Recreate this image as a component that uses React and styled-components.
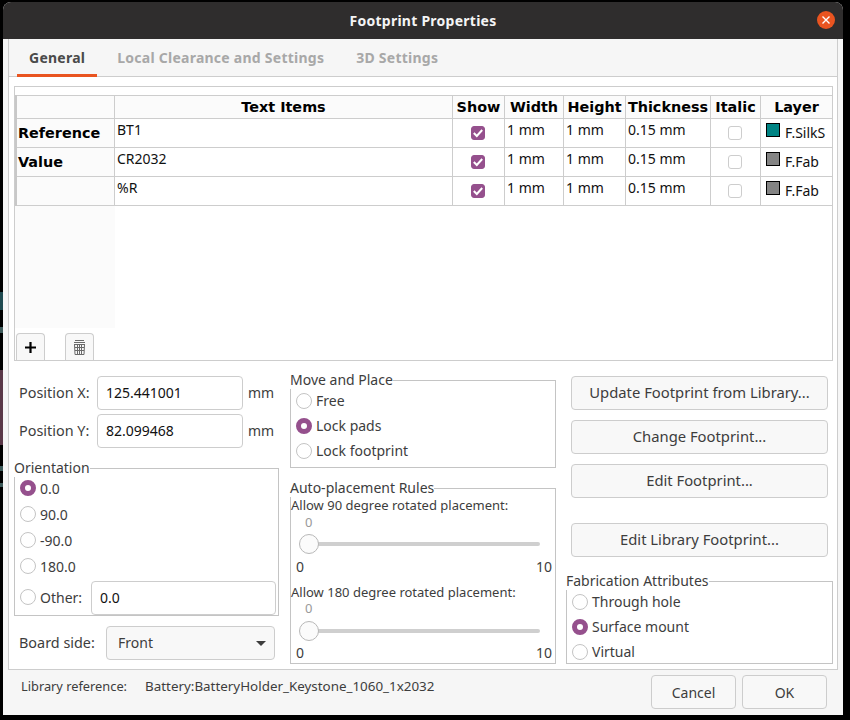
import React from "react"
import styled, { createGlobalStyle } from "styled-components"

const GlobalStyle = createGlobalStyle`
  html, body {
    margin: 0;
    padding: 0;
    background: #000;
  }
  * {
    box-sizing: border-box;
  }
`

const ui = `"Noto Sans", "Open Sans", sans-serif`
const bold = `"DejaVu Sans", sans-serif`
const purple = "#95508d"

const Screen = styled.div`
  width: 850px;
  height: 720px;
  padding: 2px 7px 5px 3px;
  background-color: #000;
  background-image: linear-gradient(
    to bottom,
    transparent 292px,
    #1f4a50 292px,
    #1f4a50 310px,
    transparent 310px,
    transparent 327px,
    #3d5a5a 327px,
    #3d5a5a 333px,
    transparent 333px,
    transparent 370px,
    #5a3848 370px,
    #5a3848 445px,
    transparent 445px,
    transparent 466px,
    #3d5a5a 466px,
    #3d5a5a 471px,
    transparent 471px,
    transparent 483px,
    #3d5a5a 483px,
    #3d5a5a 487px,
    transparent 487px
  );
  background-size: 3px 100%;
  background-repeat: no-repeat;
  font-family: ${ui};
  font-size: 14px;
  color: #3d3d3d;
  overflow: hidden;
`

const Dialog = styled.div`
  width: 840px;
  height: 713px;
  display: flex;
  flex-direction: column;
  background: #f6f6f6;
  border-radius: 8px 8px 0 0;
  overflow: hidden;
`

const TitleBar = styled.div`
  height: 37px;
  flex: none;
  display: flex;
  align-items: center;
  justify-content: center;
  position: relative;
  background: #2f2d2d;
  color: #f4f4f4;
  font-weight: 700;
  font-size: 14px;
  letter-spacing: 0.25px;
`

const CloseButton = styled.div`
  position: absolute;
  right: 8px;
  top: 9px;
  width: 18px;
  height: 18px;
  border-radius: 50%;
  background: #e95420;
  display: flex;
  align-items: center;
  justify-content: center;
`

const Notebook = styled.div`
  flex: none;
  margin-left: 5px;
  width: 830px;
  height: 631px;
  display: flex;
  flex-direction: column;
  border: 1px solid #cdcdcd;
  border-top: none;
`

const TabStrip = styled.div`
  flex: none;
  height: 38px;
  display: flex;
  padding-left: 8px;
  background: #f6f6f6;
  border-bottom: 1px solid #cdcdcd;
`

const Tab = styled.div`
  height: 38px;
  padding: 2px 12px 0;
  margin-right: 8px;
  display: flex;
  align-items: center;
  font-weight: 700;
  font-size: 14px;
  letter-spacing: 0.25px;
  color: ${(p) => (p.$active ? "#4a4a4a" : "#a8a8a8")};
  border-bottom: 3px solid ${(p) => (p.$active ? "#e95420" : "transparent")};
`

const Page = styled.div`
  flex: 1;
  background: #fff;
  padding: 9px 4px 0 5px;
  display: flex;
  flex-direction: column;
`

const GridBox = styled.div`
  height: 275px;
  flex: none;
  border: 1px solid #cdcdcd;
  display: flex;
  flex-direction: column;
  padding-top: 8px;
`

const GridArea = styled.div`
  height: 233px;
  flex: none;
  background: linear-gradient(to right, #fbfbfb 100px, #fff 100px);
`

const Table = styled.div`
  display: grid;
  grid-template-columns: 98px 338px 52px 59px 62px 85px 50px 72px;
  grid-template-rows: 24px;
  grid-auto-rows: 29px;
  border-left: 2px solid #c8c8c8;
`

const HeadCell = styled.div`
  display: flex;
  align-items: center;
  justify-content: center;
  background: #fbfbfb;
  font-family: ${bold};
  font-weight: 700;
  font-size: 14.4px;
  color: #000;
  white-space: nowrap;
  border-top: 1px solid #cdcdcd;
  border-right: 1px solid #cdcdcd;
  border-bottom: 1px solid #cdcdcd;
`

const RowLabel = styled.div`
  display: flex;
  align-items: center;
  padding-left: 1px;
  background: #fbfbfb;
  font-family: ${bold};
  font-weight: 700;
  font-size: 14.4px;
  color: #000;
  border-right: 1px solid #cdcdcd;
  border-bottom: 1px solid #cdcdcd;
`

const Cell = styled.div`
  padding: 2px 0 0 2px;
  font-size: 14px;
  line-height: 18px;
  color: #111;
  white-space: nowrap;
  overflow: hidden;
  border-right: 1px solid #cdcdcd;
  border-bottom: 1px solid #cdcdcd;
`

const CheckCell = styled(Cell)`
  display: flex;
  align-items: center;
  justify-content: center;
  padding: 0 1px 0 0;
`

const Check = styled.div`
  width: 14px;
  height: 14px;
  border-radius: 3px;
  display: flex;
  align-items: center;
  justify-content: center;
  background: ${(p) => (p.$on ? purple : "#fff")};
  border: 1px solid ${(p) => (p.$on ? purple : "#cdcdcd")};
`

const LayerCell = styled(Cell)`
  display: flex;
  align-items: flex-start;
  gap: 5px;
  padding: 4px 0 0 5px;
`

const Swatch = styled.div`
  flex: none;
  width: 14px;
  height: 14px;
  border: 1px solid #000;
  background: ${(p) => p.$color};
`

const LayerName = styled.span`
  padding-top: 1px;
`

const Toolbar = styled.div`
  flex: none;
  height: 32px;
  display: flex;
  align-items: flex-end;
  gap: 20px;
  padding-left: 1px;
`

const ToolButton = styled.div`
  width: 29px;
  height: 27px;
  display: flex;
  align-items: center;
  justify-content: center;
  background: #f8f8f8;
  border: 1px solid #cdcdcd;
  border-bottom: none;
  border-radius: 4px 4px 0 0;
`

const Columns = styled.div`
  flex: none;
  display: flex;
  margin-top: 11px;
`

const LeftColumn = styled.div`
  width: 276px;
  flex: none;
  display: flex;
  flex-direction: column;
  padding-top: 4px;
`

const MiddleColumn = styled.div`
  width: 266px;
  flex: none;
  display: flex;
  flex-direction: column;
`

const RightColumn = styled.div`
  width: 267px;
  flex: none;
  margin-left: 10px;
  display: flex;
  flex-direction: column;
  padding-top: 4px;
`

const FieldRow = styled.div`
  display: flex;
  align-items: center;
  height: 34px;
  margin-bottom: ${(p) => p.$mb || 0}px;
  padding-left: 5px;
`

const FieldLabel = styled.div`
  width: 78px;
  flex: none;
  padding-bottom: 2px;
  font-size: 14.4px;
`

const TextField = styled.div`
  width: ${(p) => p.$w}px;
  height: 34px;
  flex: none;
  margin: ${(p) => p.$mt || 0}px 0 0 ${(p) => p.$ml || 0}px;
  display: flex;
  align-items: center;
  padding: 0 0 1px 8px;
  background: #fff;
  border: 1px solid #cdcdcd;
  border-radius: 4px;
  color: #111;
`

const Unit = styled.div`
  margin-left: 5px;
  padding-bottom: 2px;
`

const Group = styled.fieldset`
  margin: ${(p) => p.$mt || 0}px 0 0;
  padding: 0;
  min-width: 0;
  width: ${(p) => p.$w}px;
  height: ${(p) => p.$h}px;
  border: 1px solid #c4c4c4;
  border-radius: 0;
  display: flex;
  flex-direction: column;
`

const Legend = styled.legend`
  padding: 0 0 2px;
  margin: 0 0 ${(p) => -(p.$pull || 1)}px -1px;
  line-height: 15px;
  white-space: nowrap;
`

const RadioRow = styled.div`
  display: flex;
  align-items: center;
  height: ${(p) => p.$h}px;
  padding-left: 5px;
  gap: 4px;
`

const Radio = styled.div`
  width: 16px;
  height: 16px;
  flex: none;
  border-radius: 50%;
  border: ${(p) => (p.$on ? `5px solid ${purple}` : "1px solid #c4c4c4")};
  background: #fff;
`

const SideRow = styled.div`
  display: flex;
  align-items: center;
  margin-top: 10px;
  padding-left: 5px;
`

const SideLabel = styled.div`
  width: 87px;
  flex: none;
  padding-bottom: 1px;
  font-size: 14.4px;
`

const Select = styled.div`
  width: 169px;
  height: 34px;
  display: flex;
  align-items: center;
  justify-content: space-between;
  padding: 0 8px 1px 11px;
  background: #f8f8f8;
  border: 1px solid #cdcdcd;
  border-radius: 4px;
`

const Caret = styled.div`
  width: 0;
  height: 0;
  margin-top: 1px;
  border-left: 5px solid transparent;
  border-right: 5px solid transparent;
  border-top: 5px solid #3d3d3d;
`

const HelpText = styled.div`
  font-size: 13px;
  line-height: 17px;
  margin: ${(p) => p.$shift}px 0 ${(p) => -p.$shift}px;
  white-space: nowrap;
`

const Slider = styled.div`
  display: flex;
  flex-direction: column;
  height: 69px;
  padding: 0 3px 0 5px;
`

const SliderValue = styled.div`
  height: 17px;
  padding: 2px 0 0 9px;
  line-height: 15px;
  font-size: 13px;
  color: #9a9a9a;
`

const Track = styled.div`
  height: 20px;
  margin: ${(p) => (p.$low ? 5 : 4)}px 0 0 13px;
  width: 231px;
  position: relative;
  display: flex;
  align-items: center;
`

const TrackLine = styled.div`
  width: 100%;
  height: 4px;
  border-radius: 2px;
  background: #cfcfcf;
`

const Thumb = styled.div`
  position: absolute;
  left: -10px;
  top: 0;
  width: 20px;
  height: 20px;
  border-radius: 50%;
  background: #fbfbfb;
  border: 1px solid #b8b8b8;
`

const Scale = styled.div`
  display: flex;
  justify-content: space-between;
  margin-top: ${(p) => (p.$low ? 3 : 4)}px;
  line-height: 18px;
  font-size: 14px;
`

const ActionButton = styled.div`
  width: 257px;
  height: 34px;
  flex: none;
  margin: ${(p) => p.$mt}px 0 0 5px;
  padding-bottom: 2px;
  display: flex;
  align-items: center;
  justify-content: center;
  background: #f8f8f8;
  border: 1px solid #cdcdcd;
  border-radius: 4px;
  font-size: 14.8px;
  white-space: nowrap;
`

const Footer = styled.div`
  flex: 1;
  display: flex;
  align-items: flex-start;
  padding: 5px 16px 0 18px;
`

const LibraryLabel = styled.div`
  width: 124px;
  flex: none;
  font-size: 12.8px;
  line-height: 22px;
`

const LibraryName = styled.div`
  flex: 1;
  font-size: 13.4px;
  line-height: 22px;
`

const DialogButton = styled.div`
  width: 85px;
  height: 34px;
  margin-left: 6px;
  display: flex;
  align-items: center;
  justify-content: center;
  background: #f8f8f8;
  border: 1px solid #cdcdcd;
  border-radius: 4px;
`

const columns = ["", "Text Items", "Show", "Width", "Height", "Thickness", "Italic", "Layer"]

const rows = [
  { label: "Reference", text: "BT1", layer: "F.SilkS", color: "#008484" },
  { label: "Value", text: "CR2032", layer: "F.Fab", color: "#848484" },
  { label: "", text: "%R", layer: "F.Fab", color: "#848484" },
]

const Tick = () => (
  <svg width="10" height="10" viewBox="0 0 10 10" fill="none">
    <path d="M.8 5 L3.8 8 L9.2 2" stroke="#fff" strokeWidth="2" />
  </svg>
)

const TrashIcon = () => (
  <svg width="11" height="15" viewBox="0 0 11 15" fill="none" stroke="#6a6a6a" strokeWidth="1">
    <path d="M1 .5H10M0 2.5H11M0 4.5H11M.5 4.5L1 14.5H10L10.5 4.5" />
    <path d="M1 7.5H10M1 10.5H10M3.5 4.5V14.5M5.5 4.5V14.5M7.5 4.5V14.5" />
  </svg>
)

const PlusIcon = () => (
  <svg width="11" height="11" viewBox="0 0 11 11" fill="none">
    <path d="M5.5 0V11M0 5.5H11" stroke="#000" strokeWidth="2.2" />
  </svg>
)

const RotationSlider = ({ low }) => (
  <Slider>
    <SliderValue>0</SliderValue>
    <Track $low={low}>
      <TrackLine />
      <Thumb />
    </Track>
    <Scale $low={low}>
      <span>0</span>
      <span>10</span>
    </Scale>
  </Slider>
)

const App = () => (
  <Screen>
    <GlobalStyle />
    <Dialog>
      <TitleBar>
        Footprint Properties
        <CloseButton>
          <svg width="8" height="8" viewBox="0 0 8 8">
            <path d="M.5 .5L7.5 7.5M7.5 .5L.5 7.5" stroke="#fff" strokeWidth="1.4" />
          </svg>
        </CloseButton>
      </TitleBar>
      <Notebook>
        <TabStrip>
          <Tab $active>General</Tab>
          <Tab>Local Clearance and Settings</Tab>
          <Tab>3D Settings</Tab>
        </TabStrip>
        <Page>
          <GridBox>
            <GridArea>
              <Table>
                {columns.map((c, i) => (
                  <HeadCell key={i}>{c}</HeadCell>
                ))}
                {rows.map((r) => (
                  <React.Fragment key={r.text}>
                    <RowLabel>{r.label}</RowLabel>
                    <Cell>{r.text}</Cell>
                    <CheckCell>
                      <Check $on>
                        <Tick />
                      </Check>
                    </CheckCell>
                    <Cell>1 mm</Cell>
                    <Cell>1 mm</Cell>
                    <Cell>0.15 mm</Cell>
                    <CheckCell>
                      <Check />
                    </CheckCell>
                    <LayerCell>
                      <Swatch $color={r.color} />
                      <LayerName>{r.layer}</LayerName>
                    </LayerCell>
                  </React.Fragment>
                ))}
              </Table>
            </GridArea>
            <Toolbar>
              <ToolButton>
                <PlusIcon />
              </ToolButton>
              <ToolButton>
                <TrashIcon />
              </ToolButton>
            </Toolbar>
          </GridBox>
          <Columns>
            <LeftColumn>
              <FieldRow $mb={4}>
                <FieldLabel>Position X:</FieldLabel>
                <TextField $w={146}>125.441001</TextField>
                <Unit>mm</Unit>
              </FieldRow>
              <FieldRow>
                <FieldLabel>Position Y:</FieldLabel>
                <TextField $w={146}>82.099468</TextField>
                <Unit>mm</Unit>
              </FieldRow>
              <Group $w={265} $h={156} $mt={12}>
                <Legend $pull={2}>Orientation</Legend>
                <RadioRow $h={26}>
                  <Radio $on />
                  0.0
                </RadioRow>
                <RadioRow $h={26}>
                  <Radio />
                  90.0
                </RadioRow>
                <RadioRow $h={26}>
                  <Radio />
                  -90.0
                </RadioRow>
                <RadioRow $h={26}>
                  <Radio />
                  180.0
                </RadioRow>
                <RadioRow $h={36}>
                  <Radio />
                  Other:
                  <TextField $w={185} $ml={5} $mt={2}>0.0</TextField>
                </RadioRow>
              </Group>
              <SideRow>
                <SideLabel>Board side:</SideLabel>
                <Select>
                  Front
                  <Caret />
                </Select>
              </SideRow>
            </LeftColumn>
            <MiddleColumn>
              <Group $w={266} $h={96}>
                <Legend>Move and Place</Legend>
                <RadioRow $h={25}>
                  <Radio />
                  Free
                </RadioRow>
                <RadioRow $h={25}>
                  <Radio $on />
                  Lock pads
                </RadioRow>
                <RadioRow $h={25}>
                  <Radio />
                  Lock footprint
                </RadioRow>
              </Group>
              <Group $w={266} $h={184} $mt={12}>
                <Legend>Auto-placement Rules</Legend>
                <HelpText $shift={1}>Allow 90 degree rotated placement:</HelpText>
                <RotationSlider />
                <HelpText $shift={2}>Allow 180 degree rotated placement:</HelpText>
                <RotationSlider low />
              </Group>
            </MiddleColumn>
            <RightColumn>
              <ActionButton $mt={0}>Update Footprint from Library...</ActionButton>
              <ActionButton $mt={10}>Change Footprint...</ActionButton>
              <ActionButton $mt={10}>Edit Footprint...</ActionButton>
              <ActionButton $mt={25}>Edit Library Footprint...</ActionButton>
              <Group $w={267} $h={91} $mt={16}>
                <Legend>Fabrication Attributes</Legend>
                <RadioRow $h={25}>
                  <Radio />
                  Through hole
                </RadioRow>
                <RadioRow $h={25}>
                  <Radio $on />
                  Surface mount
                </RadioRow>
                <RadioRow $h={25}>
                  <Radio />
                  Virtual
                </RadioRow>
              </Group>
            </RightColumn>
          </Columns>
        </Page>
      </Notebook>
      <Footer>
        <LibraryLabel>Library reference:</LibraryLabel>
        <LibraryName>Battery:BatteryHolder_Keystone_1060_1x2032</LibraryName>
        <DialogButton>Cancel</DialogButton>
        <DialogButton>OK</DialogButton>
      </Footer>
    </Dialog>
  </Screen>
)

export default App
